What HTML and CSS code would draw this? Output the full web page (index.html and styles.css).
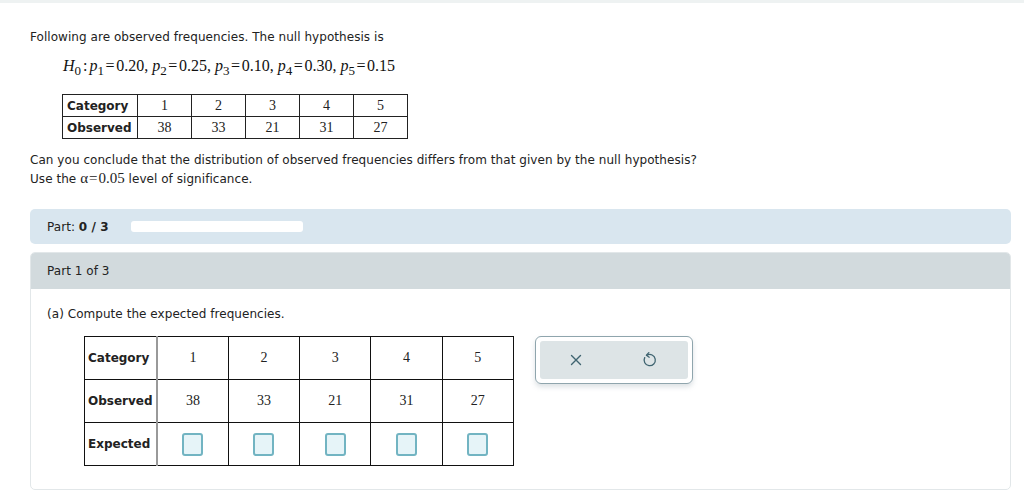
FILE: index.html
```html
<!DOCTYPE html>
<html>
<head>
<meta charset="utf-8">
<link rel="stylesheet" href="styles.css">
</head>
<body>
<div class="topbar"></div>
<div class="content">
  <p class="line intro">Following are observed frequencies. The null hypothesis is</p>
  <div class="formula"><i>H</i><sub>0</sub><span class="colon">:</span><i>p</i><sub>1</sub><span class="eq">=</span>0.20, <i>p</i><sub>2</sub><span class="eq">=</span>0.25, <i>p</i><sub>3</sub><span class="eq">=</span>0.10, <i>p</i><sub>4</sub><span class="eq">=</span>0.30, <i>p</i><sub>5</sub><span class="eq">=</span>0.15</div>
  <table class="small">
    <tr><th>Category</th><td>1</td><td>2</td><td class="sep">3</td><td>4</td><td>5</td></tr>
    <tr><th>Observed</th><td>38</td><td>33</td><td class="sep">21</td><td>31</td><td>27</td></tr>
  </table>
  <div class="question">
    <p class="line">Can you conclude that the distribution of observed frequencies differs from that given by the null hypothesis?</p>
    <p class="line">Use the <span class="m">α<span class="eq">=</span>0.05</span> level of significance.</p>
  </div>
  <div class="partbar">
    <span class="partlabel">Part: <b>0 / 3</b></span>
    <span class="progress"></span>
  </div>
  <div class="card">
    <div class="cardhead">Part 1 of 3</div>
    <div class="cardbody">
      <p class="line">(a) Compute the expected frequencies.</p>
      <div class="work">
        <table class="big">
          <tr><th>Category</th><td>1</td><td>2</td><td>3</td><td>4</td><td>5</td></tr>
          <tr><th>Observed</th><td>38</td><td>33</td><td>21</td><td>31</td><td>27</td></tr>
          <tr><th>Expected</th><td><span class="inp"></span></td><td><span class="inp"></span></td><td><span class="inp"></span></td><td><span class="inp"></span></td><td><span class="inp"></span></td></tr>
        </table>
        <div class="tools">
          <div class="toolsin">
            <svg class="ico" width="14" height="14" viewBox="0 0 14 14"><path d="M2.5 2.5 L11.5 11.5 M11.5 2.5 L2.5 11.5" stroke="#3f6470" stroke-width="1.4" fill="none" stroke-linecap="round"/></svg>
            <svg class="ico" width="16" height="18" viewBox="0 0 16 18"><path d="M5 4.2 A5.6 5.6 0 1 1 2.7 6.6" stroke="#3f6470" stroke-width="1.3" fill="none" stroke-linecap="round"/><path d="M6.8 1.6 L4.4 4.2 L7.2 6.2" stroke="#3f6470" stroke-width="1.3" fill="none" stroke-linecap="round" stroke-linejoin="round"/></svg>
          </div>
        </div>
      </div>
    </div>
  </div>
</div>
</body>
</html>
```

FILE: styles.css
```css
html, body { margin: 0; padding: 0; background: #fff; }
body { font-family: "DejaVu Sans", Verdana, sans-serif; font-size: 12px; color: #222; letter-spacing: 0.05px; }
.topbar { height: 3px; background: #eef2f2; }
.content { padding: 0 13px 0 30px; }
.line { margin: 0; line-height: 18px; height: 18px; white-space: nowrap; }
.intro { margin-top: 25px; }
.formula { margin: 10px 0 0 33px; height: 20px; line-height: 20px; font-family: "Liberation Serif", "Times New Roman", serif; font-size: 16px; color: #111; white-space: nowrap; letter-spacing: 0; }
.formula sub { font-size: 13px; vertical-align: -4px; line-height: 0; }
.formula .colon { padding: 0 2px; }
.formula .eq { padding: 0 1.6px; }
table { border-collapse: collapse; letter-spacing: 0; }
.small { margin: 18px 0 0 32px; }
.small th, .small td { border: 1px solid #222; height: 21px; padding: 0; }
.small th { width: 70px; text-align: left; padding-left: 4px; font-weight: bold; font-size: 12px; }
.small td { width: 53px; text-align: center; font-family: "Liberation Serif", "Times New Roman", serif; font-size: 14px; }
.small td.sep { border-left-color: #999; }
.question { margin-top: 12px; }
.m { font-family: "Liberation Serif", "Times New Roman", serif; font-size: 15px; letter-spacing: 0; }
.m .eq { padding: 0 1px; }
.partbar { margin-top: 22px; height: 35px; background: #d9e6ef; border-radius: 5px; display: flex; align-items: center; padding-left: 17px; }
.partlabel { width: 84px; }
.progress { width: 172px; height: 11px; background: #fff; border-radius: 3px; }
.card { margin-top: 8px; border: 1px solid #e2e7e9; border-radius: 5px; overflow: hidden; }
.cardhead { height: 36px; line-height: 36px; background: #d2dadd; padding-left: 16px; }
.cardbody { padding: 16px 0 23px 16px; }
.work { display: flex; align-items: flex-start; gap: 21px; margin: 13px 0 0 37px; }
.big { table-layout: fixed; width: 430px; }
.big th, .big td { border: 1px solid #111; height: 42px; padding: 0; }
.big th { width: 68px; text-align: left; padding-left: 3px; border-right: 2px solid #999; font-size: 12px; }
.big td { text-align: center; font-family: "Liberation Serif", "Times New Roman", serif; font-size: 14px; }
.inp { display: inline-block; width: 17px; height: 19px; border: 2px solid #72b4c2; background: #e6f4f8; border-radius: 3px; vertical-align: middle; }
.tools { border: 1px solid #8fa5ad; border-radius: 6px; padding: 4px; box-shadow: 0 3px 5px rgba(120,140,150,0.25); }
.toolsin { width: 148px; height: 38px; background: #dde4e6; border-radius: 3px; display: flex; align-items: center; }
.ico { display: block; }
.ico:first-child { margin-left: 29px; }
.ico:last-child { margin-left: 59px; }
```
